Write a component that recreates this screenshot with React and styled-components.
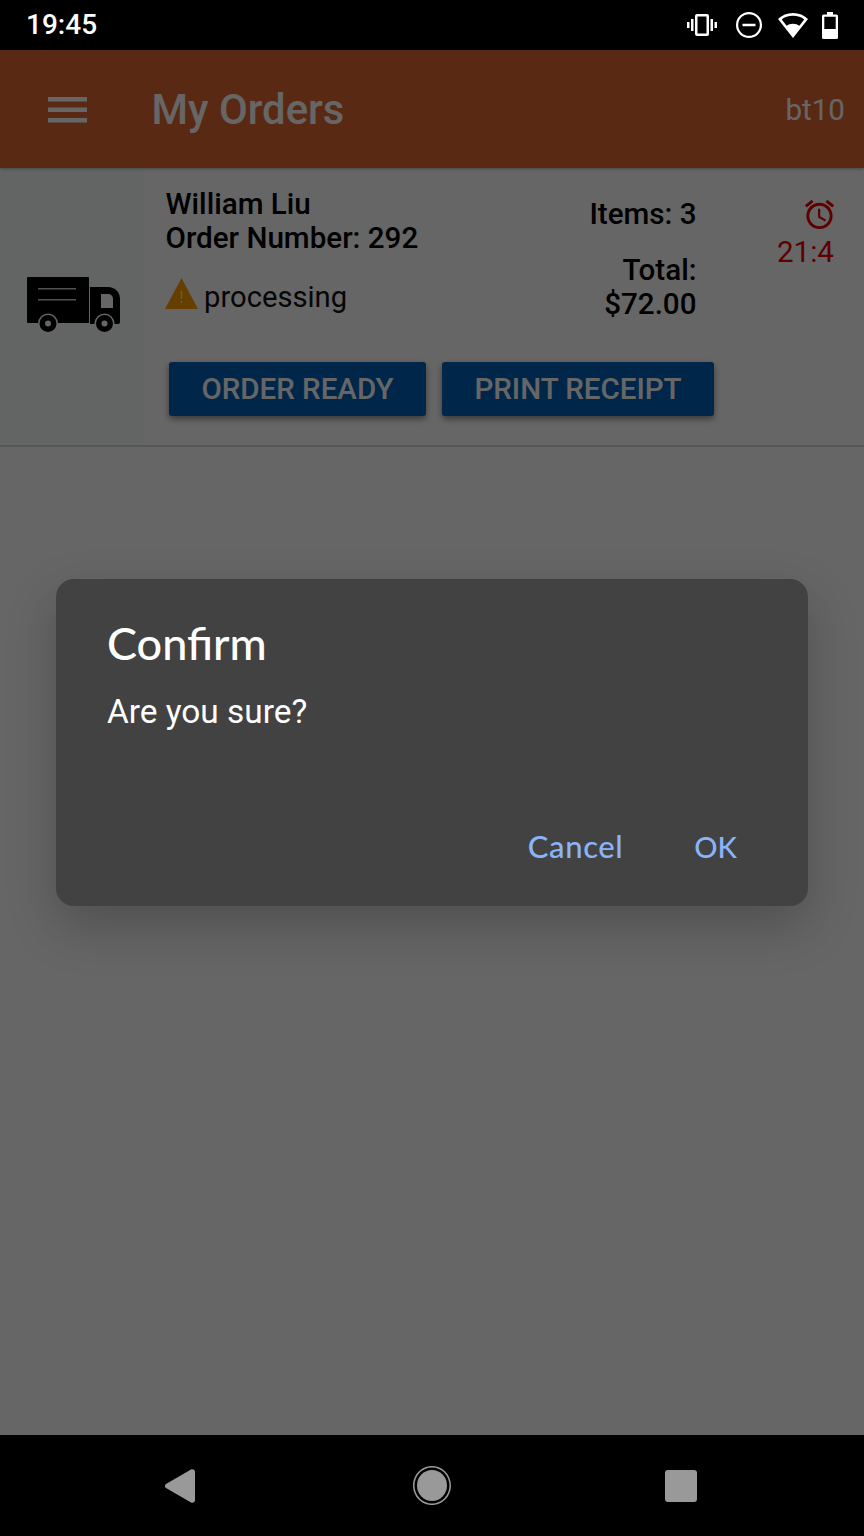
import React from "react";
import styled, { createGlobalStyle } from "styled-components";

const Global = createGlobalStyle`
  html, body { margin: 0; padding: 0; background: #000; }
  * { box-sizing: border-box; }
  #root { width: 864px; height: 1536px; font-family: Roboto, "Liberation Sans", sans-serif; }
`;
const Page = styled.div`
  width: 864px; height: 1536px; display: flex; flex-direction: column; background: #000; overflow: hidden;
`;
const StatusBar = styled.div`
  height: 50px; flex: none; background: #000; display: flex; align-items: center;
  justify-content: space-between; padding: 0 24px 0 26px; color: #fff;
`;
const Clock = styled.span`
  font-size: 28px; font-weight: 500; line-height: 50px;
`;
const StatusIcons = styled.div`
  display: flex; align-items: center; height: 50px; width: 153px;
`;
const StatusIcon = styled.svg`
  display: block; flex: none; margin-left: ${p => p.$gap}px; fill: #fff;
`;
const Screen = styled.div`
  position: relative; flex: 1; background: #fff; display: flex; flex-direction: column;
`;
const AppBar = styled.header`
  height: 118px; flex: none; background: #e16632; display: flex; align-items: center;
  padding: 2px 19px 0 48px; color: #fff;
  box-shadow: 0 1px 3px rgba(0,0,0,.3); position: relative;
`;
const MenuIcon = styled.svg`
  width: 39px; height: 26px; display: block; fill: #fff; flex: none;
`;
const Title = styled.h1`
  margin: 0 0 0 64.500px; font-size: 41.800px; font-weight: 500; flex: 1; line-height: 48px;
`;
const UserName = styled.span`
  font-size: 29.600px; font-weight: 400;
`;
const Card = styled.section`
  height: 279px; flex: none; display: flex; border-bottom: 2px solid #d9d9d9;
`;
const ThumbCell = styled.div`
  width: 144px; flex: none; background: #f7fcf9; display: flex; align-items: center;
  justify-content: center; padding: 0 0 4px 3px;
`;
const Body = styled.div`
  flex: 1; display: flex; flex-direction: column;
`;
const TopRow = styled.div`
  display: flex; height: 194px;
`;
const Info = styled.div`
  width: 384px; padding: 19px 0 0 21.500px;
`;
const BoldLine = styled.div`
  font-size: 29.600px; font-weight: 500; line-height: 34px; color: #000; white-space: nowrap;
`;
const StateRow = styled.div`
  display: flex; align-items: flex-start; margin: 23px 0 0 -0.500px; height: 36px;
`;
const StateText = styled.span`
  font-size: 29.200px; font-weight: 400; color: #111; margin-left: 6px; padding-top: 2px;
`;
const Totals = styled.div`
  width: 168.500px; text-align: right; padding-top: 29px;
`;
const TotalBlock = styled.div`
  margin-top: 22px;
`;
const Timer = styled.div`
  flex: 1; display: flex; flex-direction: column; align-items: flex-end; padding: 29px 30px 0 0; color: #e60000;
`;
const TimerIcon = styled.svg`
  display: block; fill: currentColor; margin-right: -3px;
`;
const TimerText = styled.span`
  font-size: 29.600px; line-height: 34px; margin-top: 3px;
`;
const ButtonRow = styled.div`
  display: flex; gap: 16px; padding-left: 25px;
`;
const ActionButton = styled.button`
  height: 54px; width: ${p => p.$w}px; border: 0; border-radius: 3px; background: #0060ba; color: #fff;
  font-family: inherit; font-size: 29.500px; font-weight: 500; padding: 0; text-transform: uppercase;
  box-shadow: 0 3px 6px rgba(0,0,0,.45);
`;
const Scrim = styled.div`
  position: absolute; inset: 0; background: rgba(0,0,0,.6); display: flex; align-items: center; justify-content: center;
`;
const Dialog = styled.div`
  width: 752px; height: 327px; background: #424242; border-radius: 18px; padding: 39px 51px 0;
  box-shadow: 0 20px 50px rgba(0,0,0,.22); display: flex; flex-direction: column; color: #fff;
`;
const DialogTitle = styled.h2`
  margin: 0; font-family: "Lato", sans-serif; font-weight: 500; font-size: 45px; line-height: 50px;
`;
const DialogText = styled.p`
  margin: 25px 0 0; font-size: 33.400px; line-height: 38px; font-weight: 400; color: #fff;
`;
const DialogActions = styled.div`
  margin-top: auto; display: flex; justify-content: flex-end; align-items: baseline; gap: 71px; padding: 0 20px 41px 0;
`;
const DialogAction = styled.span`
  font-family: "Lato", sans-serif; font-size: ${p => p.$size}px; font-weight: 500; line-height: 36px; color: #8ab4f8;
  letter-spacing: ${p => p.$track}px;
`;
const NavBar = styled.nav`
  height: 101px; flex: none; background: #000; display: flex; align-items: center; justify-content: center; padding-right: 2px;
`;
const NavIcon = styled.svg`
  display: block; flex: none; margin-left: ${p => p.$gap}px; fill: #999;
`;

const Truck = () => (
  <svg width="94" height="56" viewBox="0 0 94 56" style={{ display: "block" }}>
    <path d="M1 0h60a1 1 0 0 1 1 1v45H1a1 1 0 0 1-1-1V1a1 1 0 0 1 1-1z" fill="#000" />
    <path d="M63 10h18c7 0 12 5 12 12v23a2 2 0 0 1-2 2H63z" fill="#000" />
    <path d="M11 11h38v1.400H11zM11 22h38v1.400H11z" fill="#ccc" />
    <path d="M74 17h7c3 0 5 2 5 5v9H74z" fill="#fff" />
    <circle cx="21" cy="46.500" r="10" fill="#fff" />
    <circle cx="21" cy="46.500" r="8.500" fill="#000" />
    <circle cx="21" cy="46.500" r="3" fill="#fff" />
    <circle cx="77.500" cy="46.500" r="10" fill="#fff" />
    <circle cx="77.500" cy="46.500" r="8.500" fill="#000" />
    <circle cx="77.500" cy="46.500" r="3" fill="#fff" />
  </svg>
);

const Warning = () => (
  <svg width="33" height="31" viewBox="0 0 33 31" style={{ display: "block", flex: "none" }}>
    <path d="M16.500 0L33 31H0z" fill="#ff9d00" />
    <path d="M15.700 13h1.600l-.2 8h-1.200zM15.700 23h1.600v2h-1.600z" fill="#fff" opacity=".7" />
  </svg>
);

export default function App() {
  return (
    <Page>
      <Global />
      <StatusBar>
        <Clock>19:45</Clock>
        <StatusIcons>
          <StatusIcon $gap={0} width="30" height="22" viewBox="0 0 30 22">
            <path d="M0 8h2.500v6H0zM4 5h2.500v12H4zM27.500 8H30v6h-2.500zM23.500 5H26v12h-2.500zM10 0h10a2 2 0 0 1 2 2v18a2 2 0 0 1-2 2H10a2 2 0 0 1-2-2V2a2 2 0 0 1 2-2zm.5 2.500v17h9v-17z" fillRule="evenodd" />
          </StatusIcon>
          <StatusIcon $gap={19} width="26" height="26" viewBox="0 0 26 26">
            <path d="M13 0a13 13 0 1 1 0 26a13 13 0 0 1 0-26zm0 2.200a10.800 10.800 0 1 0 0 21.600a10.800 10.800 0 0 0 0-21.600zM6.500 11.800h13v2.400h-13z" fillRule="evenodd" />
          </StatusIcon>
          <StatusIcon $gap={16} width="30" height="25" viewBox="0 0 30 25">
            <path d="M15 0c6 0 11 2 15 6L15 25 0 6c4-4 9-6 15-6zm0 2.800c-4.500 0-8.500 1.300-11.200 3.700l4.800 6.200c1.700-1.300 3.900-2 6.400-2s4.700.7 6.400 2l4.800-6.200C23.500 4.100 19.500 2.800 15 2.800z" fillRule="evenodd" />
          </StatusIcon>
          <StatusIcon $gap={14} width="16" height="27" viewBox="0 0 16 27">
            <path d="M5 0h6v2.500h3.500A1.500 1.500 0 0 1 16 4v21.500a1.500 1.500 0 0 1-1.500 1.500h-13A1.500 1.500 0 0 1 0 25.500V4a1.500 1.500 0 0 1 1.500-1.500H5zM2.300 4.800V17h11.400V4.800z" fillRule="evenodd" />
          </StatusIcon>
        </StatusIcons>
      </StatusBar>
      <Screen>
        <AppBar>
          <MenuIcon viewBox="0 0 39 26">
            <path d="M0 0h39v4.500H0zM0 10.500h39V15H0zM0 21h39v4.500H0z" />
          </MenuIcon>
          <Title>My Orders</Title>
          <UserName>bt10</UserName>
        </AppBar>
        <Card>
          <ThumbCell><Truck /></ThumbCell>
          <Body>
            <TopRow>
              <Info>
                <BoldLine>William Liu</BoldLine>
                <BoldLine>Order Number: 292</BoldLine>
                <StateRow>
                  <Warning />
                  <StateText>processing</StateText>
                </StateRow>
              </Info>
              <Totals>
                <BoldLine>Items: 3</BoldLine>
                <TotalBlock>
                  <BoldLine>Total:</BoldLine>
                  <BoldLine>$72.00</BoldLine>
                </TotalBlock>
              </Totals>
              <Timer>
                <TimerIcon width="35" height="35" viewBox="0 0 24 24">
                  <path d="M22 5.720l-4.600-3.860-1.290 1.530 4.600 3.860L22 5.720zM7.880 3.390L6.600 1.860 2 5.710l1.290 1.530 4.590-3.850zM12.500 8H11v6l4.750 2.850.75-1.230-4-2.370V8zM12 4c-4.970 0-9 4.030-9 9s4.020 9 9 9c4.970 0 9-4.030 9-9s-4.030-9-9-9zm0 16c-3.870 0-7-3.130-7-7s3.130-7 7-7 7 3.130 7 7-3.130 7-7 7z" />
                </TimerIcon>
                <TimerText>21:4</TimerText>
              </Timer>
            </TopRow>
            <ButtonRow>
              <ActionButton $w={257}>Order Ready</ActionButton>
              <ActionButton $w={272}>Print Receipt</ActionButton>
            </ButtonRow>
          </Body>
        </Card>
        <Scrim>
          <Dialog>
            <DialogTitle>Confirm</DialogTitle>
            <DialogText>Are you sure?</DialogText>
            <DialogActions>
              <DialogAction $size={31} $track={0.6}>Cancel</DialogAction>
              <DialogAction $size={29} $track={0}>OK</DialogAction>
            </DialogActions>
          </Dialog>
        </Scrim>
      </Screen>
      <NavBar>
        <NavIcon $gap={0} width="30" height="34" viewBox="0 0 30 34">
          <path d="M26 0.500c2 -.8 4 .5 4 2v29c0 1.500-2 2.800-4 2L1 19c-1.500-1-1.500-3 0-4z" />
        </NavIcon>
        <NavIcon $gap={218} width="38" height="39" viewBox="0 0 38 39">
          <path d="M19 0c10.500 0 19 8.700 19 19.500S29.500 39 19 39 0 30.300 0 19.500 8.500 0 19 0zm0 1.500C9.300 1.500 1.500 9.600 1.500 19.500S9.300 37.500 19 37.500s17.500-8.100 17.500-18S28.700 1.500 19 1.500z" fillRule="evenodd" />
          <ellipse cx="19" cy="19.500" rx="15" ry="15.500" />
        </NavIcon>
        <NavIcon $gap={214} width="32" height="32" viewBox="0 0 32 32">
          <rect width="32" height="32" rx="3" />
        </NavIcon>
      </NavBar>
    </Page>
  );
}
